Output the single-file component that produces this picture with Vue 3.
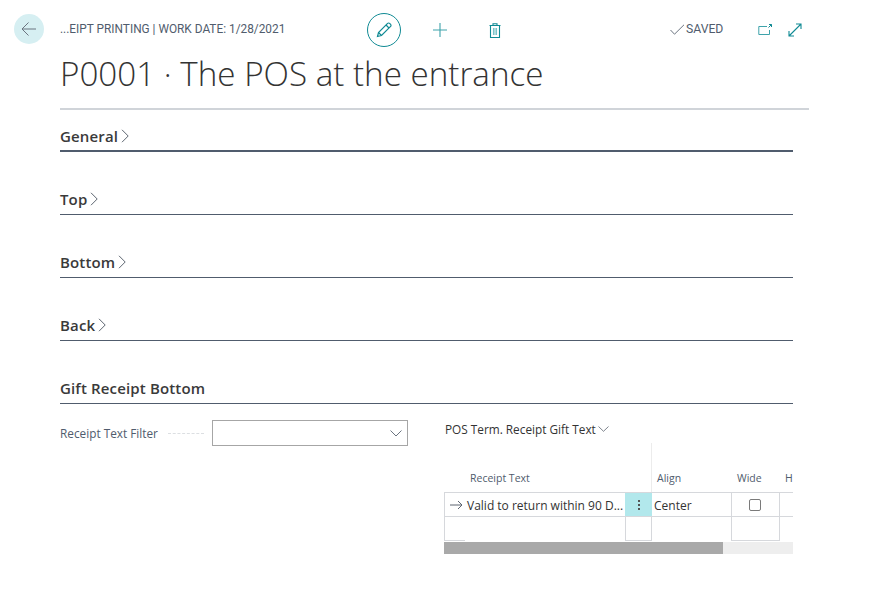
<template>
  <div class="page">
    <header class="topbar">
      <button class="back" type="button" aria-label="Back">
        <svg width="18" height="18" viewBox="0 0 18 18" fill="none" stroke="#6b7480" stroke-width="1">
          <path d="M16 9H2M8.5 2.5L2 9l6.5 6.5" />
        </svg>
      </button>
      <div class="crumb">...EIPT PRINTING | WORK DATE: 1/28/2021</div>
      <div class="actions">
        <span class="edit">
          <svg width="18" height="18" viewBox="0 0 18 18" fill="none" stroke="#108a94" stroke-width="1.2">
            <path d="M2.5 15.5l1-4L12.6 2.4a1.4 1.4 0 0 1 2 0l1 1a1.4 1.4 0 0 1 0 2L6.5 14.5z" />
            <path d="M11 4l3 3M3.5 11.5l3 3" />
          </svg>
        </span>
        <svg class="plus" width="16" height="16" viewBox="0 0 16 16" fill="none" stroke="#3ea3ab" stroke-width="1.1">
          <path d="M8 1v14M1 8h14" />
        </svg>
        <svg class="trash" width="12" height="15" viewBox="0 0 12 15" fill="none" stroke="#108a94" stroke-width="1.1">
          <path d="M.5 2.5h11M4 2.5V.8h4v1.7M1.5 2.5v12h9v-12" />
          <path d="M4.5 5v7M6 5v7M7.5 5v7" stroke="#7cc4c9" />
        </svg>
      </div>
      <div class="saved">
        <svg width="15" height="11" viewBox="0 0 15 11" fill="none" stroke="#6b7480" stroke-width="1">
          <path d="M.5 6l4 4.2L14 .8" />
        </svg>
        <span>SAVED</span>
      </div>
      <div class="views">
        <svg width="14" height="11" viewBox="0 0 14 11" fill="none" stroke="#3ea3ab" stroke-width="1">
          <path d="M9 2.5H.8v8h10.700V6" />
          <path d="M10.500 3.500L13.500.5M11 .5h2.500V3" stroke="#108a94" />
        </svg>
        <svg width="14" height="14" viewBox="0 0 14 14" fill="none" stroke="#108a94" stroke-width="1.1">
          <path d="M1 13L13 1M8 1h5v5M1 8v5h5" />
        </svg>
      </div>
    </header>

    <h1 class="title">P0001 · The POS at the entrance</h1>
    <div class="title-rule"></div>

    <section v-for="s in collapsed" :key="s" class="group">
      <h2 class="group-head">
        {{ s }}
        <svg width="8" height="14" viewBox="0 0 8 14" fill="none" stroke="#5d6570" stroke-width="1">
          <path d="M1 .8L7.200 7 1 13.200" />
        </svg>
      </h2>
    </section>

    <section class="group">
      <h2 class="group-head">Gift Receipt Bottom</h2>
    </section>

    <div class="gift">
      <div class="filter">
        <label>Receipt Text Filter</label>
        <span class="dots"></span>
        <div class="select">
          <svg width="12" height="7" viewBox="0 0 12 7" fill="none" stroke="#6b7480" stroke-width="1">
            <path d="M.5.500L6 6l5.500-5.500" />
          </svg>
        </div>
      </div>

      <div class="part">
        <div class="part-title">
          POS Term. Receipt Gift Text
          <svg width="11" height="6" viewBox="0 0 11 6" fill="none" stroke="#5d6570" stroke-width="0.8">
            <path d="M.5.500L5.500 5.300 10.500.5" />
          </svg>
        </div>
        <div class="grid-wrap">
          <div class="row head">
            <div class="c-text">Receipt Text</div>
            <div class="c-menu"></div>
            <div class="c-align">Align</div>
            <div class="c-wide">Wide</div>
            <div class="c-h">H</div>
          </div>
          <div class="row body">
            <div class="c-text">
              <svg width="13" height="10" viewBox="0 0 13 10" fill="none" stroke="#5d6570" stroke-width="1">
                <path d="M0 5h12M8 1l4 4-4 4" />
              </svg>
              <span class="cell-value">Valid to return within 90 D...</span>
            </div>
            <div class="c-menu active"><i></i><i></i><i></i></div>
            <div class="c-align"><span class="cell-value">Center</span></div>
            <div class="c-wide"><span class="check"></span></div>
            <div class="c-h"></div>
          </div>
          <div class="row body empty">
            <div class="c-text"><span class="stub"></span></div>
            <div class="c-menu closed"></div>
            <div class="c-align"></div>
            <div class="c-wide closed"></div>
            <div class="c-h"></div>
          </div>
          <div class="scroll"><div class="thumb"></div></div>
        </div>
      </div>
    </div>
  </div>
</template>

<script setup>
const collapsed = ['General', 'Top', 'Bottom', 'Back']
</script>

<style>
html, body { background: #fff; }
</style>

<style scoped>
.page {
  width: 870px;
  height: 591px;
  overflow: hidden;
  font-family: "Open Sans", "Noto Sans", sans-serif;
  color: #333;
}
.topbar {
  display: flex;
  align-items: center;
  height: 60px;
  padding: 0 0 0 14px;
  box-sizing: border-box;
}
.back {
  width: 30px;
  height: 30px;
  margin-top: -3px;
  border: 0;
  padding: 0;
  border-radius: 50%;
  background: #d6eff2;
  display: flex;
  align-items: center;
  justify-content: center;
}
.crumb {
  width: 307px;
  margin-left: 16px;
  margin-top: -2px;
  font-family: Roboto, sans-serif;
  font-size: 11.85px;
  color: #505c6d;
  white-space: nowrap;
}
.actions {
  display: flex;
  align-items: center;
  width: 303px;
}
.edit {
  width: 32px;
  height: 32px;
  border: 1px solid #108a94;
  border-radius: 50%;
  display: flex;
  align-items: center;
  justify-content: center;
}
.plus { margin-left: 31px; }
.trash { margin-left: 41px; }
.saved {
  display: flex;
  align-items: center;
  gap: 1px;
  width: 88px;
  margin-top: -2px;
  font-family: Roboto, sans-serif;
  font-size: 12.2px;
  color: #505c6d;
}
.views {
  display: flex;
  align-items: center;
  gap: 15.5px;
  margin-top: -1px;
}
.title {
  margin: -5px 0 0 60px;
  font-size: 33.2px;
  line-height: 38px;
  font-weight: 300;
  color: #333;
  white-space: nowrap;
}
.title-rule {
  width: 749px;
  height: 2px;
  margin: 15px 0 0 60px;
  background: #d0d4d9;
}
.group {
  width: 733px;
  height: 63px;
  margin-left: 60px;
  box-sizing: border-box;
  display: flex;
  align-items: flex-end;
  border-bottom: 1px solid #505c6d;
}
.group:first-of-type {
  height: 42px;
  border-bottom-width: 2px;
}
.group-head {
  display: flex;
  align-items: center;
  gap: 3px;
  margin: 0 0 5px;
  font-size: 15px;
  line-height: 20px;
  font-weight: 600;
  letter-spacing: 0.15px;
  color: #3a3a3a;
}
.group:first-of-type .group-head { margin-bottom: 4px; }
.gift {
  display: flex;
  width: 733px;
  margin-left: 60px;
}
.filter {
  display: flex;
  align-items: center;
  width: 384px;
  height: 26px;
  margin-top: 16px;
  font-size: 11.8px;
  color: #505c6d;
}
.filter label { white-space: nowrap; width: 108px; }
.dots {
  width: 36px;
  margin-right: 8px;
  border-top: 1px dashed #dcdfe2;
}
.select {
  width: 196px;
  height: 26px;
  box-sizing: border-box;
  flex: none;
  border: 1px solid #a6a6a6;
  display: flex;
  align-items: center;
  justify-content: flex-end;
  padding-right: 5px;
}
.part { width: 349px; margin-top: 16px; }
.part-title {
  display: flex;
  align-items: center;
  gap: 2px;
  height: 17px;
  padding-left: 1px;
  font-size: 11.8px;
  color: #333;
}
.grid-wrap { width: 349px; overflow: hidden; margin-top: 6px; }
.row {
  display: grid;
  grid-template-columns: 181px 27px 80px 48px 14px;
  font-size: 12px;
}
.head { height: 49px; }
.head > div {
  display: flex;
  align-items: flex-end;
  padding-bottom: 7px;
  font-size: 10.5px;
  color: #505c6d;
  box-sizing: border-box;
}
.head .c-text { padding-left: 26px; }
.head .c-menu { border-right: 1px solid #ececec; }
.head .c-align { padding-left: 5px; }
.head .c-wide { padding-left: 5px; }
.head .c-h { padding-left: 5px; }
.body { height: 24px; border-top: 1px solid #d6d8dc; box-sizing: border-box; }
.body > div {
  display: flex;
  align-items: center;
  box-sizing: border-box;
  border-right: 1px solid #d6d8dc;
  white-space: nowrap;
}
.body .c-text {
  gap: 4px;
  padding-left: 5px;
  border-left: 1px solid #d6d8dc;
  border-right: 0;
  color: #333;
}
.cell-value { padding-top: 2px; }
.body .c-menu { border-left: 1px solid #d6d8dc; }
.body .c-align { padding-left: 2px; color: #333; }
.body .c-wide { justify-content: center; padding-right: 1px; }
.body .c-h { border-right: 0; }
.c-menu.active {
  flex-direction: column;
  justify-content: center;
  gap: 2px;
  background: #b2e8ec;
  border: 0;
}
.c-menu.active i {
  width: 2px;
  height: 2px;
  background: #555;
}
.check {
  width: 10px;
  height: 10px;
  border: 1px solid #7a7a7a;
  border-radius: 2px;
}
.body.empty { height: 25px; }
.body .closed { border-bottom: 1px solid #d6d8dc; }
.stub {
  align-self: flex-end;
  width: 20px;
  margin-left: -5px;
  border-bottom: 1px solid #d6d8dc;
}
.scroll {
  height: 12px;
  margin-top: 1px;
  background: #eee;
}
.thumb {
  width: 279px;
  height: 100%;
  background: #a9a9a9;
}
</style>
